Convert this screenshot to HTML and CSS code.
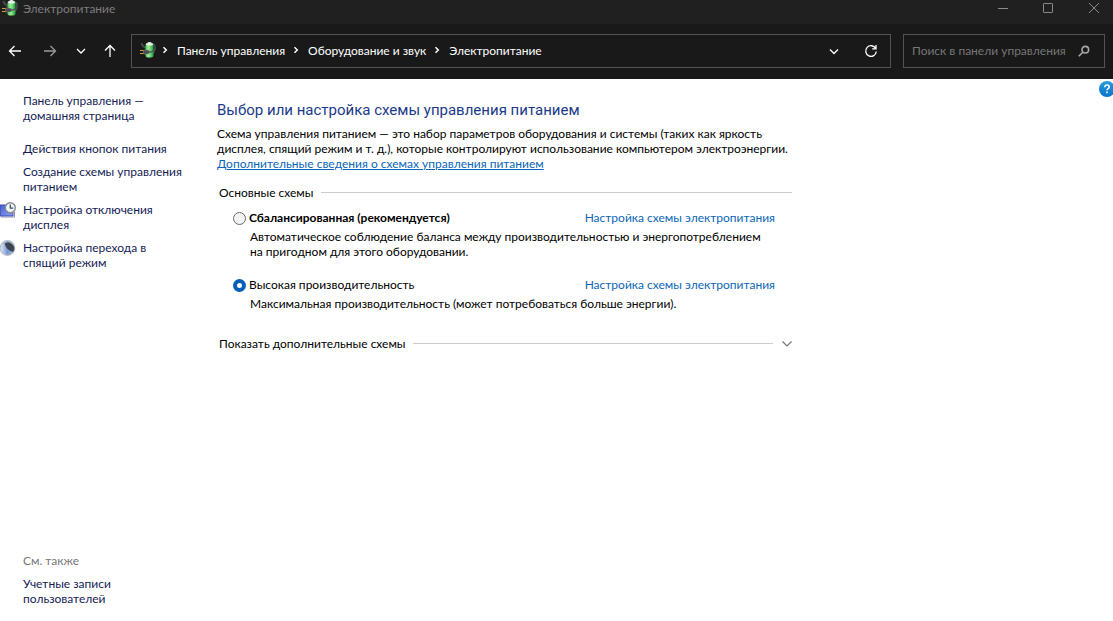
FILE: index.html
```html
<!DOCTYPE html>
<html lang="ru">
<head>
<meta charset="utf-8">
<title>Электропитание</title>
<link rel="stylesheet" href="styles.css">
</head>
<body>
<svg width="0" height="0" class="defs" aria-hidden="true">
  <defs>
    <linearGradient id="cell" x1="0" x2="1"><stop offset="0" stop-color="#4cc455"/><stop offset=".4" stop-color="#9df09a"/><stop offset="1" stop-color="#1f9a38"/></linearGradient>
    <linearGradient id="screen" x1="0" y1="0" x2="1" y2="1"><stop offset="0" stop-color="#4a5fd0"/><stop offset="1" stop-color="#8aa2f2"/></linearGradient>
    <linearGradient id="help" x1="0" y1="0" x2="0" y2="1"><stop offset="0" stop-color="#2a9be0"/><stop offset="1" stop-color="#0873c8"/></linearGradient>
    <linearGradient id="orb" x1="0" x2="1"><stop offset="0" stop-color="#e4edf8"/><stop offset=".5" stop-color="#7396d0"/><stop offset="1" stop-color="#c3cad4"/></linearGradient>
    <symbol id="power" viewBox="0 0 16 16">
      <path d="M12 1.500q4 1.500 3 5.500t-3 5" fill="none" stroke="#4d5350" stroke-width="1.300"/>
      <path d="M1.500 1q.5 3.500 5 5" fill="none" stroke="#454947" stroke-width="2"/>
      <rect x="7.500" y="0" width="4" height="2" rx="1" fill="#d5dcd8"/>
      <rect x="5.500" y="1" width="8" height="14.500" rx="2" fill="url(#cell)"/>
      <ellipse cx="9.500" cy="2.300" rx="3.500" ry="1.300" fill="#e7f1e8"/>
      <path d="M0 8.500h4M0 11.500h4" stroke="#d99a2b" stroke-width="1.200"/>
      <path d="M3.500 8h3q3.500 0 3.500 2t-3.500 2h-3z" fill="#4a4e50" stroke="#85898a" stroke-width=".5"/>
      <path d="M10 10q4 0 4-4" fill="none" stroke="#4a4e50" stroke-width="1.300"/>
    </symbol>
  </defs>
</svg>
<header class="titlebar">
  <svg class="app-icon"><use href="#power"/></svg>
  <span class="title">Электропитание</span>
  <button class="win-btn" aria-label="Свернуть"><svg width="10" height="10"><path d="M0 5.500h10"/></svg></button>
  <button class="win-btn" aria-label="Развернуть"><svg width="10" height="10"><rect x=".5" y=".5" width="9" height="9" rx=".6"/></svg></button>
  <button class="win-btn" aria-label="Закрыть"><svg width="10" height="10"><path d="M0 0l10 10M10 0L0 10"/></svg></button>
</header>
<nav class="toolbar">
  <div class="history">
    <button aria-label="Назад"><svg width="14" height="14"><path d="M13 7H1.500M6.500 2L1.500 7l5 5"/></svg></button>
    <button class="dim" aria-label="Вперед"><svg width="14" height="14"><path d="M1 7h11.500M7.500 2l5 5-5 5"/></svg></button>
    <button aria-label="Последние страницы"><svg width="14" height="14"><path d="M3 5l4 4 4-4"/></svg></button>
    <button aria-label="Вверх"><svg width="14" height="14"><path d="M7 13V1.500M2 6.500l5-5 5 5"/></svg></button>
  </div>
  <div class="address">
    <svg class="app-icon"><use href="#power"/></svg>
    <svg class="crumb-arrow" width="6" height="8"><path d="M1.500 1.200L4.300 4 1.500 6.800"/></svg>
    <a href="#">Панель управления</a>
    <svg class="crumb-arrow" width="6" height="8"><path d="M1.500 1.200L4.300 4 1.500 6.800"/></svg>
    <a href="#">Оборудование и звук</a>
    <svg class="crumb-arrow" width="6" height="8"><path d="M1.500 1.200L4.300 4 1.500 6.800"/></svg>
    <a href="#">Электропитание</a>
    <div class="address-tools">
      <button aria-label="Предыдущие расположения"><svg width="14" height="14"><path d="M3 5.500l4 4 4-4"/></svg></button>
      <button aria-label="Обновить"><svg width="14" height="14"><path d="M11.700 4.500A5.300 5.300 0 1 0 12.300 7.500M12 1v3.800H8.200"/></svg></button>
    </div>
  </div>
  <div class="search">
    <input type="search" aria-label="Поиск в панели управления" placeholder="Поиск в панели управления">
    <svg width="12" height="12"><circle cx="7.300" cy="4.700" r="3.300"/><path d="M5 7L.8 11.200"/></svg>
  </div>
</nav>
<div class="page">
  <aside class="sidebar">
    <a class="home" href="#">Панель управления —<br>домашняя страница</a>
    <a href="#">Действия кнопок питания</a>
    <a href="#">Создание схемы управления<br>питанием</a>
    <div class="task">
      <svg width="16" height="16"><path d="M0 3h13v11H0z" fill="url(#screen)" stroke="#3a4ab0"/><path d="M1 15h13.500V10" fill="none" stroke="#8c94ad"/><circle cx="10.300" cy="5.700" r="5" fill="#f0f5f8" stroke="#858b91" stroke-width="1.400"/><path d="M10.300 2.500v3.700h3" fill="none" stroke="#39516a" stroke-width="1.300"/></svg>
      <a href="#">Настройка отключения<br>дисплея</a>
    </div>
    <div class="task">
      <svg width="16" height="16"><circle cx="7.500" cy="8" r="7.300" fill="url(#orb)" stroke="#b9bfc5" stroke-width="1.200"/><path d="M4.500 3.500Q9 1 12.500 4.500t.5 7.500Q7 11 4.500 3.500z" fill="#3d4551"/></svg>
      <a href="#">Настройка перехода в<br>спящий режим</a>
    </div>
    <div class="see-also">См. также</div>
    <a href="#">Учетные записи<br>пользователей</a>
  </aside>
  <main class="content">
    <h1>Выбор или настройка схемы управления питанием</h1>
    <p>Схема управления питанием — это набор параметров оборудования и системы (таких как яркость<br>дисплея, спящий режим и т. д.), которые контролируют использование компьютером электроэнергии.<br><a class="more" href="#">Дополнительные сведения о схемах управления питанием</a></p>
    <section class="plans">
      <h2 class="rule">Основные схемы</h2>
      <div class="plan">
        <div class="plan-head">
          <input type="radio" name="plan" id="balanced">
          <label class="strong" for="balanced">Сбалансированная (рекомендуется)</label>
          <a href="#">Настройка схемы электропитания</a>
        </div>
        <p>Автоматическое соблюдение баланса между производительностью и энергопотреблением<br>на пригодном для этого оборудовании.</p>
      </div>
      <div class="plan">
        <div class="plan-head">
          <input type="radio" name="plan" id="performance" checked>
          <label for="performance">Высокая производительность</label>
          <a href="#">Настройка схемы электропитания</a>
        </div>
        <p>Максимальная производительность (может потребоваться больше энергии).</p>
      </div>
      <button class="rule expand">Показать дополнительные схемы<svg width="10" height="8"><path d="M.5 1.500L5 6l4.500-4.500"/></svg></button>
    </section>
  </main>
  <button class="help" aria-label="Справка"><svg width="16" height="16"><circle cx="8" cy="8" r="8" fill="url(#help)"/><path d="M5.800 6.200Q5.800 4 8 4t2.200 2Q10.200 7.200 8.900 7.900 8 8.400 8 9.300M8 10.600v1.700" fill="none" stroke="#fff" stroke-width="1.600"/></svg></button>
</div>
</body>
</html>
```
FILE: styles.css
```css
* { box-sizing: border-box; }

body {
  margin: 0;
  min-height: 100vh;
  display: flex;
  flex-direction: column;
  background: #fff;
  color: #000;
  font: 12px/15px Lato, "Noto Sans", sans-serif;
  white-space: nowrap;
  overflow: hidden;
}

.defs { position: absolute; }
svg { display: block; flex: none; }
a { color: inherit; text-decoration: none; }
h1, h2, p { margin: 0; font-weight: 400; }

button {
  padding: 0;
  border: 0;
  background: none;
  color: inherit;
  font: inherit;
}

.app-icon { width: 16px; height: 16px; }

.titlebar {
  display: flex;
  align-items: center;
  height: 24px;
  padding: 0 0 8px 2px;
  background: #202020;
  color: #7d7d7d;
}

.title { flex: 1; margin-left: 5px; }

.win-btn {
  display: grid;
  place-items: center;
  width: 45px;
  height: 16px;
}

.win-btn:last-child { width: 38px; }
.win-btn svg { fill: none; stroke: #8a8a8a; }
.win-btn:nth-last-child(2) { margin-right: 5px; }

.toolbar {
  display: flex;
  height: 55px;
  padding: 10px 8px 11px;
  background: #191919;
  color: #fff;
}

.toolbar button svg { fill: none; stroke: #fff; stroke-width: 1.3; }
.toolbar .dim svg { stroke: #9a9a9a; }

.history {
  display: flex;
  align-items: center;
  gap: 16px;
  width: 123px;
}

.history button:nth-child(2) { margin: 0 1px 0 5px; }
.history button:nth-child(3) { margin-right: -1px; }

.address {
  display: flex;
  flex: 1;
  align-items: center;
  padding: 0 12px 2px 8px;
  border: 1px solid #535353;
}

.crumb-arrow { margin: 0 9px 0 8px; fill: none; stroke: #fff; stroke-width: 1.5; }
.app-icon + .crumb-arrow { margin-left: 6px; }

.address-tools {
  display: flex;
  gap: 23px;
  margin-left: auto;
  padding-top: 2px;
}

.search {
  display: flex;
  align-items: center;
  width: 202px;
  margin-left: 12px;
  padding: 0 14px 0 8px;
  border: 1px solid #535353;
}

.search input {
  flex: 1;
  min-width: 0;
  padding: 0 0 2px;
  border: 0;
  outline: 0;
  background: none;
  color: #fff;
  font: inherit;
}

.search input::placeholder { color: #777; opacity: 1; }
.search svg { fill: none; stroke: #aaa; stroke-width: 1.6; }

.page {
  position: relative;
  display: flex;
  flex: 1;
}

.sidebar {
  display: flex;
  flex-direction: column;
  gap: 8px;
  width: 217px;
  padding: 14px 0 15px 23px;
  color: #151c55;
}

.home { margin-bottom: 10px; }
.task { display: flex; margin-left: -23px; gap: 7px; }
.see-also { margin-top: auto; color: #777; }

.content { width: 575px; padding-top: 21px; }

h1 {
  margin-bottom: 6px;
  color: #1a3a8a;
  font-family: Roboto, "Noto Sans", sans-serif;
  font-size: 15px;
  line-height: 20px;
}

.more { color: #0a66b7; text-decoration: underline; }

.plans { padding: 14px 0 0 2px; }

.rule {
  display: flex;
  align-items: center;
  width: 100%;
  font-size: 12px;
}

.rule::after {
  content: "";
  flex: 1;
  height: 1px;
  margin-left: 7px;
  background: #ccc;
}

.plan { margin: 10px 17px 0 14px; }
.plan + .plan { margin-top: 18px; }

.plan-head { display: flex; align-items: flex-end; }
.plan-head a { margin-left: auto; color: #0a66b7; }
.plan p { margin: 4px 0 0 17px; }
.strong { font-weight: 700; }

input[type="radio"] {
  appearance: none;
  width: 13px;
  height: 13px;
  margin: 0 3px 0 0;
  border: 1px solid #6b6b6b;
  border-radius: 50%;
  background: #f3f3f3;
}

input[type="radio"]:checked {
  border: 4px solid #005fb8;
  background: #fff;
}

.expand { margin-top: 25px; }
.expand svg { order: 1; margin-left: 9px; fill: none; stroke: #777; stroke-width: 1.2; }

.help {
  position: absolute;
  top: 2px;
  right: -2px;
}
```
